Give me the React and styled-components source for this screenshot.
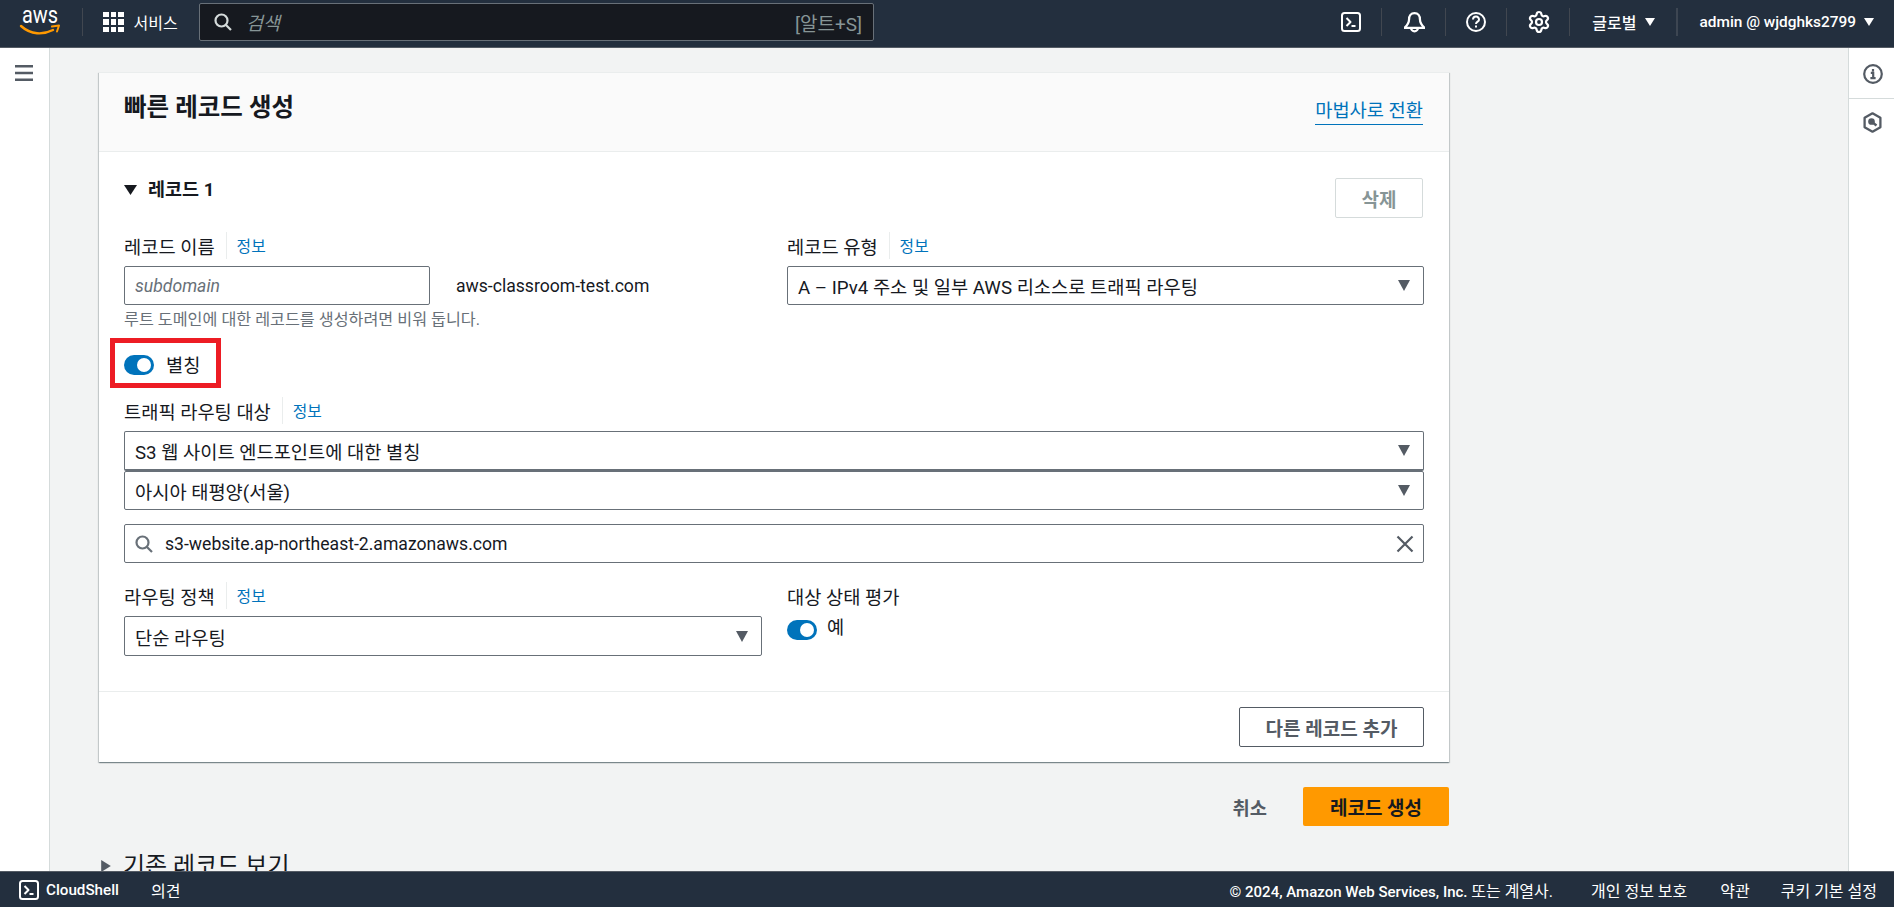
import React from "react";
import styled, { createGlobalStyle } from "styled-components";
import { Settings } from "lucide-react";

const FONT = `Roboto, "Noto Sans CJK KR", sans-serif`;
const Global = createGlobalStyle`
  html, body { margin: 0; padding: 0; height: 100%; overflow: hidden; }
  body { font-family: ${FONT}; color: #16191f; background: #f2f3f3; }
  * { box-sizing: border-box; }
`;
const Page = styled.div`height: 907px; display: grid; grid-template-rows: 48px 1fr 36px; overflow: hidden;`;
const TopBar = styled.header`
  background: #232f3e; border-bottom: 1px solid #545b64; display: flex; align-items: center; color: #fff; padding: 0 0 3px 21px; height: 48px;
`;
const Logo = styled.svg`width: 40px; height: 30px; flex: none; margin-top: -5px; overflow: visible;`;
const VLine = styled.span`
  flex: none; width: ${p => p.$bright ? 2 : 1}px; height: 28px; background: ${p => p.$bright ? "#3d4652" : "#414750"}; margin: ${p => p.$m || "0"};
`;
const ServiceBtn = styled.div`display: flex; align-items: center; gap: 10px; font-size: 16px; margin-left: 20px; width: 96px; flex: none;`;
const Grid9 = styled.span`
  display: grid; grid-template-columns: repeat(3, 5.5px); grid-auto-rows: 5.5px; gap: 2px; flex: none;
  i { background: #fff; display: block; }
`;
const SearchBox = styled.div`
  width: 675px; height: 38px; background: #16191f; border: 1px solid #687078; border-radius: 2px; display: flex; align-items: center; padding: 0 11px 0 14px; color: #aab7b8; flex: none;
`;
const Ph = styled.span`font-style: italic; font-size: 18.5px; color: #879596; margin-left: 14px; flex: 1;`;
const Kbd = styled.span`font-size: 19px; color: #879596;`;
const TopIcons = styled.div`margin-left: auto; display: flex; align-items: center; height: 100%;`;
const TopIconBtn = styled.span`
  display: flex; width: 20px; justify-content: center; margin: 0 ${p => p.$r}px 0 ${p => p.$l}px; flex: none;
  svg { flex: none; }
`;
const Region = styled.span`display: flex; align-items: center; font-size: ${p => p.$s || 16}px; font-weight: 500; gap: 8px; margin: 0 ${p => p.$r}px 0 ${p => p.$l}px;`;
const Caret = styled.svg`width: ${p => p.$w || 10}px; height: ${p => p.$h || 8}px; fill: ${p => p.$c || "#fff"}; flex: none;`;

const Body = styled.div`display: grid; grid-template-columns: 50px 1fr 46px; min-height: 0; overflow: hidden;`;
const LeftRail = styled.aside`background: #fff; border-right: 1px solid #d5dbdb; display: flex; justify-content: center; padding-top: 17px; padding-right: 2px;`;
const RightRail = styled.aside`background: #fff; border-left: 1px solid #d5dbdb; display: flex; flex-direction: column; align-items: center;`;
const RailItem = styled.div`
  width: 100%; height: ${p => p.$h}px; display: flex; justify-content: center; padding-top: ${p => p.$t}px; padding-left: 2px;
  border-bottom: ${p => p.$line ? "1px solid #d5dbdb" : "none"};
`;
const Main = styled.main`padding: 24px 0 0 49px; overflow: hidden;`;
const Card = styled.section`
  width: 1350px; background: #fff; border-top: 1px solid #eaeded;
  box-shadow: 0 1px 1px 0 rgba(0,28,36,.3), 1px 1px 1px 0 rgba(0,28,36,.15), -1px 1px 1px 0 rgba(0,28,36,.15);
`;
const CardHead = styled.div`
  height: 79px; background: #fafafa; border-bottom: 1px solid #eaeded; padding: 0 26px 0 25px; display: flex; justify-content: space-between;
`;
const Title = styled.h2`margin: 18px 0 0; font-size: 24.5px; line-height: 34px; font-weight: 700; color: #16191f;`;
const Link = styled.a`
  margin-top: 26px; height: 26px; font-size: 18.7px; line-height: 24px; color: #0073bb; border-bottom: 1.5px solid #0073bb;
`;
const CardBody = styled.div`padding: 26px 25px 0 25px; height: 540px; border-bottom: 1px solid #eaeded;`;
const RecordHead = styled.div`display: flex; justify-content: space-between; align-items: flex-start; height: 54px; padding-right: 1px;`;
const RecordTitle = styled.div`display: flex; align-items: center; gap: 11px; font-weight: 700; font-size: 18.5px; line-height: 24px;`;
const ActionBtn = styled.button`
  height: ${p => p.$h || 40}px; width: ${p => p.$w}px; border-radius: 2px; font: 700 19px ${FONT}; padding: 0;
  background: ${p => p.$primary ? "#f90" : "#fff"};
  color: ${p => p.$primary ? "#16191f" : p.$off ? "#879596" : "#545b64"};
  border: ${p => p.$primary ? "none" : `1px solid ${p.$off ? "#d5dbdb" : "#545b64"}`};
`;
const Columns = styled.div`display: grid; grid-template-columns: 638px 637px; column-gap: 25px;`;
const Field = styled.div`display: flex; flex-direction: column; min-width: 0;`;
const LabelRow = styled.div`display: flex; align-items: center; height: 27px; margin-bottom: 7px; font-size: 18.7px; color: #16191f;`;
const Info = styled.a`
  font-size: 15.8px; color: #0073bb; margin-left: 11px; padding-left: 10px; border-left: 1px solid #eaeded; height: 27px; line-height: 30px;
`;
const NameRow = styled.div`display: flex; align-items: center; gap: 26px; font-size: 17.6px;`;
const TextInput = styled.div`
  width: 306px; height: 39px; border: 1px solid #687078; border-radius: 2px; padding: 0 10px; display: flex; align-items: center; font-style: italic; color: #687078; font-size: 17.6px; background: #fff;
`;
const Hint = styled.div`font-size: 16.2px; line-height: 20px; color: #687078; margin-top: 5px;`;
const Select = styled.div`
  height: ${p => p.$h || 39}px; border: 1px solid #687078; border-radius: 2px; background: #fff; padding: 0 13px 0 10px; display: flex; align-items: center; justify-content: space-between; font-size: 18.7px; color: #16191f;
  ${p => p.$thick ? "border-bottom-width: 2px;" : ""}
`;
const Search = styled.div`
  height: 39px; margin-top: 14px; border: 1px solid #687078; border-radius: 2px; padding: 0 9px 0 10px; display: flex; align-items: center; font-size: 17.6px; color: #16191f;
`;
const SearchText = styled.span`margin-left: 12px; flex: 1;`;
const Highlight = styled.div`
  width: 111px; height: 50px; border: 5px solid #ed1c24; margin: 8px 0 0 -14px; display: flex; align-items: center; padding-left: 9px; gap: 12px; font-size: 18.7px;
`;
const Toggle = styled.span`
  width: 30px; height: 20px; border-radius: 10px; background: #0073bb; display: inline-flex; justify-content: flex-end; align-items: center; padding-right: 3px; flex: none; margin-top: 4px;
  &::after { content: ""; width: 14px; height: 14px; border-radius: 50%; background: #fff; }
`;
const Full = styled.div`margin-top: 9px;`;
const Tail = styled.div`display: grid; grid-template-columns: 638px 637px; column-gap: 25px; margin-top: 19px;`;
const HealthRow = styled.div`display: flex; gap: 10px; font-size: 18.7px; line-height: 24px; align-items: flex-start;`;
const CardFoot = styled.div`height: 70px; padding: 15px 25px 0 0; display: flex; justify-content: flex-end;`;
const Actions = styled.div`width: 1350px; display: flex; justify-content: flex-end; align-items: center; margin-top: 25px;`;
const CancelBtn = styled.span`font-weight: 700; font-size: 18.7px; color: #545b64; margin-right: 36px;`;
const Existing = styled.div`display: flex; align-items: center; margin: 23px 0 0 2px; font-size: 24px; line-height: 34px; gap: 12px; color: #16191f;`;
const BottomBar = styled.footer`
  background: #232f3e; border-top: 1px solid #545b64; color: #fff; display: flex; align-items: center; font-size: 16px; padding: 0 17px 0 19px;
`;
const Shell = styled.span`display: flex; align-items: center; gap: 7px; font-weight: 500; font-size: 15.2px;`;
const Feedback = styled.span`margin-left: 32px;`;
const Legal = styled.span`margin-left: auto; font-weight: 500; font-size: 15px;`;
const LegalKo = styled.span`font-size: 16px; font-weight: 400;`;
const FootLink = styled.span`margin-left: ${p => p.$m}px;`;

const TermIcon = ({ s = 20 }) => (
  <svg width={s} height={s} viewBox="0 0 20 20" fill="none" stroke="#fff" strokeWidth="2">
    <rect x="1" y="1" width="18" height="18" rx="2.5" />
    <path d="M5.5 6l4 4-4 4M10.5 14h4" strokeLinejoin="round" />
  </svg>
);
const CaretD = ({ w = 10, h = 8, c }) => <Caret viewBox="0 0 10 8" preserveAspectRatio="none" $w={w} $h={h} $c={c}><path d="M0 0h10L5 8z" /></Caret>;
const SelCaret = () => <CaretD w={12} h={11} c="#545b64" />;
const Mag = ({ s = 18, c = "#d5dbdb", w = 2 }) => (
  <svg width={s} height={s} viewBox="0 0 18 18" fill="none" stroke={c} strokeWidth={w}>
    <circle cx="7.5" cy="7.5" r="6" /><path d="M12 12l5 5" />
  </svg>
);

export default function App() {
  return (
    <Page>
      <Global />
      <TopBar>
        <Logo viewBox="0 0 40 30">
          <text x="1" y="18" fontSize="23" fill="#fff" fontFamily="Roboto, sans-serif" textLength="36" lengthAdjust="spacingAndGlyphs">aws</text>
          <path d="M0 21c10 9 22 9 32 4" fill="none" stroke="#f90" strokeWidth="2.4" strokeLinecap="round" />
          <path d="M31 21.5l7-1-2 6" fill="none" stroke="#f90" strokeWidth="2" strokeLinejoin="round" strokeLinecap="round" />
        </Logo>
        <VLine $m="0 0 0 21px" />
        <ServiceBtn>
          <Grid9>{Array.from({ length: 9 }, (_, i) => <i key={i} />)}</Grid9>
          서비스
        </ServiceBtn>
        <SearchBox>
          <Mag s={18} c="#d5dbdb" w={2.2} />
          <Ph>검색</Ph>
          <Kbd>[알트+S]</Kbd>
        </SearchBox>
        <TopIcons>
          <TopIconBtn $l={0} $r={20}><TermIcon /></TopIconBtn>
          <VLine />
          <TopIconBtn $l={22} $r={21}>
            <svg width="21" height="21" viewBox="1 1 18 18.500" fill="none" stroke="#fff" strokeWidth="2" strokeLinejoin="round">
              <path d="M10 2c-3.200 0-4.800 2.500-4.800 5.500 0 3-1.500 5-4 7.500h17.600c-2.500-2.500-4-4.500-4-7.500 0-3-1.600-5.500-4.800-5.500z" />
              <path d="M7 15a3 3 0 006 0" />
            </svg>
          </TopIconBtn>
          <VLine />
          <TopIconBtn $l={20} $r={20}>
            <svg width="20" height="20" viewBox="0 0 20 20" fill="none" stroke="#fff" strokeWidth="2">
              <circle cx="10" cy="10" r="9" />
              <path d="M7 7.500a3 3 0 116 .2c0 2-3 2-3 4.300M10 13.500v2" />
            </svg>
          </TopIconBtn>
          <VLine />
          <TopIconBtn $l={22} $r={20}>
            <Settings size={24} strokeWidth={2.2} color="#fff" />
          </TopIconBtn>
          <VLine />
          <Region $l={22} $r={0}>글로벌 <CaretD /></Region>
          <VLine $bright $m="0 22px 0 21px" />
          <Region $s={15.4} $l={0} $r={20}>admin @ wjdghks2799 <CaretD /></Region>
        </TopIcons>
      </TopBar>
      <Body>
        <LeftRail>
          <svg width="18" height="16" viewBox="0 0 18 16" fill="none" stroke="#545b64" strokeWidth="2.4"><path d="M0 1.200h18M0 8h18M0 14.800h18" /></svg>
        </LeftRail>
        <Main>
          <Card>
            <CardHead>
              <Title>빠른 레코드 생성</Title>
              <Link>마법사로 전환</Link>
            </CardHead>
            <CardBody>
              <RecordHead>
                <RecordTitle><CaretD w={13} h={10} c="#16191f" />레코드 1</RecordTitle>
                <ActionBtn $off $w={88}>삭제</ActionBtn>
              </RecordHead>
              <Columns>
                <Field>
                  <LabelRow>레코드 이름<Info>정보</Info></LabelRow>
                  <NameRow><TextInput>subdomain</TextInput>aws-classroom-test.com</NameRow>
                  <Hint>루트 도메인에 대한 레코드를 생성하려면 비워 둡니다.</Hint>
                </Field>
                <Field>
                  <LabelRow>레코드 유형<Info>정보</Info></LabelRow>
                  <Select>A – IPv4 주소 및 일부 AWS 리소스로 트래픽 라우팅<SelCaret /></Select>
                </Field>
              </Columns>
              <Highlight><Toggle />별칭</Highlight>
              <Full>
                <LabelRow>트래픽 라우팅 대상<Info>정보</Info></LabelRow>
                <Select $h={40} $thick>S3 웹 사이트 엔드포인트에 대한 별칭<SelCaret /></Select>
                <Select>아시아 태평양(서울)<SelCaret /></Select>
                <Search>
                  <Mag s={18} c="#687078" w={2.2} />
                  <SearchText>s3-website.ap-northeast-2.amazonaws.com</SearchText>
                  <svg width="18" height="18" viewBox="0 0 18 18" fill="none" stroke="#545b64" strokeWidth="2.2"><path d="M1.500 1.500l15 15M16.500 1.500l-15 15" /></svg>
                </Search>
              </Full>
              <Tail>
                <Field>
                  <LabelRow>라우팅 정책<Info>정보</Info></LabelRow>
                  <Select $h={40}>단순 라우팅<SelCaret /></Select>
                </Field>
                <Field>
                  <LabelRow>대상 상태 평가</LabelRow>
                  <HealthRow><Toggle />예</HealthRow>
                </Field>
              </Tail>
            </CardBody>
            <CardFoot><ActionBtn $w={185}>다른 레코드 추가</ActionBtn></CardFoot>
          </Card>
          <Actions>
            <CancelBtn>취소</CancelBtn>
            <ActionBtn $primary $w={146} $h={39}>레코드 생성</ActionBtn>
          </Actions>
          <Existing>
            <Caret viewBox="0 0 8 10" $w={10} $h={12} $c="#545b64"><path d="M0 0l8 5-8 5z" /></Caret>
            기존 레코드 보기
          </Existing>
        </Main>
        <RightRail>
          <RailItem $h={51} $t={16} $line>
            <svg width="20" height="20" viewBox="0 0 20 20" fill="none" stroke="#545b64" strokeWidth="2.2">
              <circle cx="10" cy="10" r="8.800" /><path d="M7.800 8.800h2.400v5M7.400 14.200h5.200M10 5v2.600" />
            </svg>
          </RailItem>
          <RailItem $h={60} $t={13}>
            <svg width="19" height="21" viewBox="0 0 19 21" fill="none" stroke="#545b64" strokeWidth="2.3" strokeLinejoin="round">
              <path d="M9.500 1.300l7.900 4.500v9.400l-7.900 4.500-7.900-4.500V5.800z" /><circle cx="8.500" cy="9.500" r="2.200" fill="#545b64" /><path d="M9 10l4.500 3.500" />
            </svg>
          </RailItem>
        </RightRail>
      </Body>
      <BottomBar>
        <Shell><TermIcon />CloudShell</Shell>
        <Feedback>의견</Feedback>
        <Legal>© 2024, Amazon Web Services, Inc. <LegalKo>또는 계열사.</LegalKo></Legal>
        <FootLink $m={38}>개인 정보 보호</FootLink>
        <FootLink $m={33}>약관</FootLink>
        <FootLink $m={31}>쿠키 기본 설정</FootLink>
      </BottomBar>
    </Page>
  );
}
